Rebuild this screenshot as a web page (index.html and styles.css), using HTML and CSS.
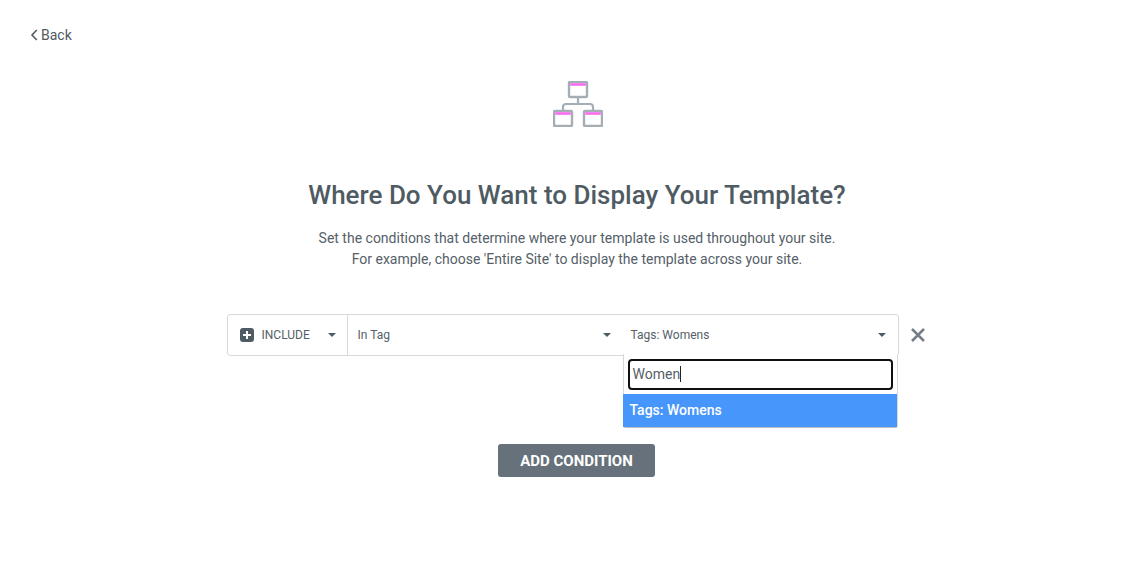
FILE: index.html
```html
<!DOCTYPE html>
<html lang="en">
<head>
<meta charset="UTF-8">
<meta name="viewport" content="width=device-width, initial-scale=1.0">
<title>Display Conditions</title>
<link rel="stylesheet" href="styles.css">
</head>
<body>

<a class="back" href="#">
  <svg class="back-icon" width="8" height="12" viewBox="0 0 8 12"><path d="M6.8 1 2 6l4.800 5" fill="none" stroke="#4f5b62" stroke-width="1.6"/></svg>
  Back
</a>

<div class="container">
  <svg class="hero-icon" width="50" height="46" viewBox="0 0 50 46">
    <g fill="#fff" stroke="#a6aeb5" stroke-width="2.4">
      <rect x="16" y="1" width="18" height="15" rx="1"/>
      <rect x="1" y="30" width="18" height="15" rx="1"/>
      <rect x="31" y="30" width="18" height="15" rx="1"/>
    </g>
    <g fill="#f86cf0">
      <rect x="17.2" y="2.2" width="15.6" height="2.6"/>
      <rect x="2.2" y="31.2" width="15.6" height="2.6"/>
      <rect x="32.2" y="31.2" width="15.6" height="2.6"/>
    </g>
    <path d="M25 16v7M10 30v-4a3 3 0 0 1 3-3h24a3 3 0 0 1 3 3v4" fill="none" stroke="#a6aeb5" stroke-width="2.2"/>
  </svg>

  <h1>Where Do You Want to Display Your Template?</h1>
  <p class="intro">Set the conditions that determine where your template is used throughout your site.<br>For example, choose 'Entire Site' to display the template across your site.</p>

  <div class="condition">
    <div class="condition-box">
      <div class="cell cell-type">
        <span class="plus-icon"></span>
        <span class="cell-label">INCLUDE</span>
        <span class="caret"></span>
      </div>
      <div class="cell cell-rule">
        <span class="cell-label">In Tag</span>
        <span class="caret"></span>
      </div>
      <div class="cell cell-value">
        <span class="cell-label">Tags: Womens</span>
        <span class="caret"></span>
        <div class="dropdown">
          <div class="search-wrap">
            <div class="search">Women<span class="cursor"></span></div>
          </div>
          <div class="option">Tags: Womens</div>
        </div>
      </div>
    </div>
    <svg class="remove" width="29" height="14" viewBox="0 0 29 14"><path d="M13 1l12 12M25 1 13 13" fill="none" stroke="#737e88" stroke-width="2.5"/></svg>
  </div>

  <button class="button">ADD CONDITION</button>
</div>

</body>
</html>
```

FILE: styles.css
```css
body, h1, p {
  margin: 0;
  padding: 0;
}
body {
  font-family: Roboto, 'Liberation Sans', sans-serif;
  background: white;
  color: #4f5b62;
}
.back {
  display: flex;
  align-items: center;
  gap: 3px;
  width: max-content;
  margin: 26px 0 0 30px;
  font-size: 14px;
  line-height: 18px;
  color: #4f5b62;
  text-decoration: none;
}
.container {
  display: flex;
  flex-direction: column;
  align-items: center;
  padding-left: 9px;
}
.hero-icon {
  margin: 37px 0 0 2px;
}
h1 {
  margin-top: 52px;
  font-size: 26px;
  line-height: 32px;
  font-weight: 500;
  color: #4f5b62;
}
.intro {
  margin-top: 17px;
  font-size: 14px;
  line-height: 21px;
  text-align: center;
  color: #556068;
}
.condition {
  display: flex;
  align-items: center;
  margin-top: 44px;
}
.condition-box {
  display: flex;
  width: 672px;
  height: 42px;
  box-sizing: border-box;
  border: 1px solid #d5dadf;
  border-radius: 3px;
  background: white;
}
.cell {
  display: flex;
  align-items: center;
  position: relative;
  box-sizing: border-box;
  font-size: 12px;
  color: #556068;
}
.cell-label {
  flex: 1;
}
.cell-type {
  width: 120px;
  padding: 0 11px 0 12px;
  border-right: 1px solid #d5dadf;
}
.cell-rule {
  width: 275px;
  padding: 0 12px 0 10px;
}
.cell-value {
  width: 275px;
  padding: 0 12px 0 8px;
}
.plus-icon {
  position: relative;
  width: 14px;
  height: 14px;
  margin-right: 8px;
  border-radius: 3px;
  background: #4f5b62;
}
.plus-icon::before, .plus-icon::after {
  content: "";
  position: absolute;
  background: white;
}
.plus-icon::before {
  left: 3px;
  top: 6px;
  width: 8px;
  height: 2px;
}
.plus-icon::after {
  left: 6px;
  top: 3px;
  width: 2px;
  height: 8px;
}
.caret {
  width: 0;
  height: 0;
  border-left: 4px solid transparent;
  border-right: 4px solid transparent;
  border-top: 4px solid #4f5b62;
}
.dropdown {
  position: absolute;
  left: 0;
  right: 0;
  top: 39px;
  box-sizing: border-box;
  border: 1px solid #d5dadf;
  border-top: none;
  border-bottom: 1px solid #b5bcc2;
  border-radius: 0 0 3px 3px;
  background: white;
}
.search-wrap {
  padding: 4px;
  padding-top: 5px;
}
.search {
  display: flex;
  align-items: center;
  height: 31px;
  box-sizing: border-box;
  padding: 0 0 2px 3px;
  border: 2px solid #101010;
  border-radius: 4px;
  font-size: 14px;
  color: #556068;
}
.cursor {
  width: 1px;
  height: 16px;
  background: #222;
}
.option {
  height: 33px;
  margin-left: -1px;
  line-height: 32px;
  padding-left: 7px;
  font-size: 14px;
  font-weight: 500;
  color: white;
  background: #4696fc;
}
.remove {
  flex: none;
}
.button {
  width: 157px;
  height: 33px;
  margin: 88px 1px 0 0;
  border: none;
  border-radius: 3px;
  background: #67717b;
  color: white;
  font-family: inherit;
  font-size: 15px;
  font-weight: 700;
  cursor: pointer;
}
```
